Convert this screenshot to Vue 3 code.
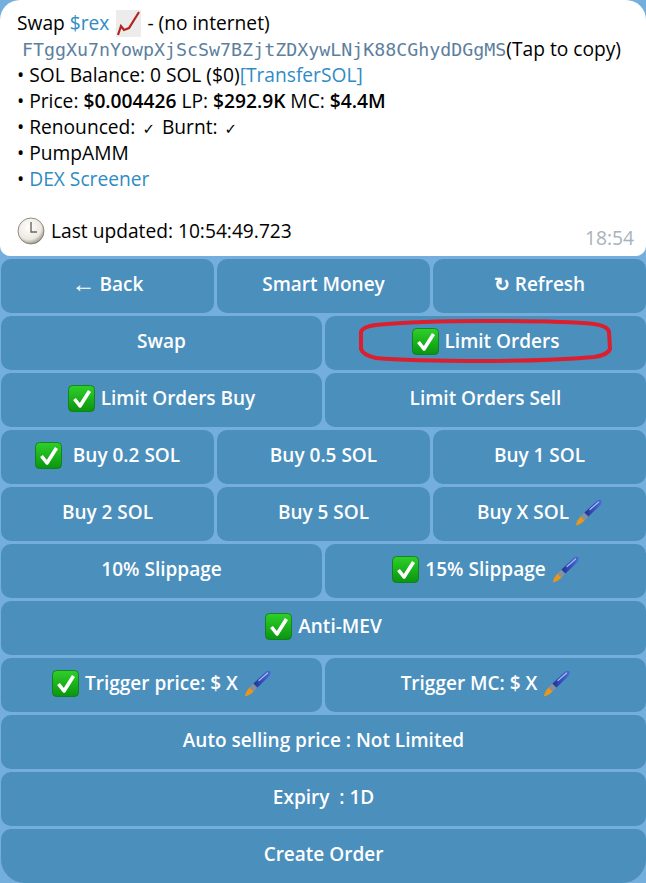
<script setup>
const filas = [
  [{ flecha: '←', texto: 'Back' }, { texto: 'Smart Money' }, { texto: '↻ Refresh' }],
  [{ texto: 'Swap' }, { texto: 'Limit Orders', check: true, marcado: true }],
  [{ texto: 'Limit Orders Buy', check: true }, { texto: 'Limit Orders Sell' }],
  [{ texto: ' Buy 0.2 SOL', check: true }, { texto: 'Buy 0.5 SOL' }, { texto: 'Buy 1 SOL' }],
  [{ texto: 'Buy 2 SOL' }, { texto: 'Buy 5 SOL' }, { texto: 'Buy X SOL', pincel: true }],
  [{ texto: '10% Slippage' }, { texto: '15% Slippage', check: true, pincel: true }],
  [{ texto: 'Anti-MEV', check: true }],
  [{ texto: 'Trigger price: $ X', check: true, pincel: true }, { texto: 'Trigger MC: $ X', pincel: true }],
  [{ texto: 'Auto selling price : Not Limited' }],
  [{ texto: 'Expiry  : 1D' }],
  [{ texto: 'Create Order' }],
]
</script>

<template>
  <div class="pagina">
    <svg width="0" height="0" class="defs">
      <defs>
        <linearGradient id="verde" x1="0" y1="0" x2="0" y2="1">
          <stop offset="0" stop-color="#2fd02a" />
          <stop offset="1" stop-color="#0a950f" />
        </linearGradient>
        <linearGradient id="azul" x1="0" y1="1" x2="1" y2="1">
          <stop offset="0" stop-color="#1f2f96" />
          <stop offset="1" stop-color="#4a6fd8" />
        </linearGradient>
        <radialGradient id="esfera" cx="0.42" cy="0.35" r="0.72">
          <stop offset="0" stop-color="#ffffff" />
          <stop offset="0.66" stop-color="#ece8e0" />
          <stop offset="1" stop-color="#7f7a72" />
        </radialGradient>
        <symbol id="check" viewBox="0 0 27 27">
          <rect x="0.5" y="0.5" width="26" height="26" rx="4" fill="url(#verde)" stroke="#0b7a12" stroke-width="0.8" />
          <path d="M6.5 14 L12 21 L21.5 6" fill="none" stroke="#fff" stroke-width="3.6" stroke-linejoin="round" />
        </symbol>
        <symbol id="pincel" viewBox="0 0 27 27">
          <path d="M9.5 13.5 L22 1.8 Q25 0 26.4 1.2 Q27.6 3 25.5 6 L13.5 17.5 Z" fill="url(#azul)" />
          <path d="M15 10.5 L23.5 3" fill="none" stroke="#a9bdf2" stroke-width="1.2" stroke-linecap="round" />
          <path d="M5.5 17.5 L9 14 L13 18 L9.5 21.5 Z" fill="#8b8f96" />
          <path d="M0.8 26.5 Q2 21 5.5 17.5 L9.5 21.5 Q6 25.5 0.8 26.5 Z" fill="#e8961c" />
        </symbol>
      </defs>
    </svg>

    <section class="burbuja">
      <p class="linea">Swap <a class="enlace">$rex</a>
        <svg class="grafico" width="25" height="27" viewBox="0 0 25 27">
          <rect x="0" y="0" width="25" height="27" fill="#ececec" />
          <path d="M2 25 L5 16 L8 20 L13 18 L23 2" fill="none" stroke="#b3231f" stroke-width="2.2" />
        </svg>
        - (no internet)</p>
      <p class="linea"><code class="direccion">FTggXu7nYowpXjScSw7BZjtZDXywLNjK88CGhydDGgMS</code>(Tap to copy)</p>
      <p class="linea">• SOL Balance: 0 SOL ($0)<a class="enlace">[TransferSOL]</a></p>
      <p class="linea">• Price: <b>$0.004426</b> LP: <b>$292.9K</b> MC: <b>$4.4M</b></p>
      <p class="linea">• Renounced: <span class="visto">✓</span> Burnt: <span class="visto">✓</span></p>
      <p class="linea">• PumpAMM</p>
      <p class="linea">• <a class="enlace">DEX Screener</a></p>
      <p class="linea">&nbsp;</p>
      <p class="linea actualizado">
        <svg class="reloj" width="28" height="28" viewBox="0 0 28 28">
          <circle cx="14" cy="14" r="13" fill="url(#esfera)" stroke="#77736c" stroke-width="0.8" />
          <path d="M14 5 V15 H20" fill="none" stroke="#6a665f" stroke-width="1.4" />
        </svg>
        Last updated: 10:54:49.723
      </p>
      <span class="hora">18:54</span>
    </section>

    <div class="teclado">
      <div v-for="(fila, i) in filas" :key="i" class="fila">
        <button v-for="boton in fila" :key="boton.texto" class="boton">
          <svg v-if="boton.check" class="icono" width="27" height="27"><use href="#check" /></svg>
          <span v-if="boton.flecha" class="flecha">{{ boton.flecha }}</span>
          <span class="etiqueta">{{ boton.texto }}</span>
          <svg v-if="boton.pincel" class="icono" width="27" height="27"><use href="#pincel" /></svg>
          <svg v-if="boton.marcado" class="marca" width="254" height="44" viewBox="0 0 254 44">
            <path d="M3 13 Q4 8 18 6 Q60 2 126 2 Q205 2 236 5 Q250 7 251 13 L252 30 Q250 36 236 38 Q190 42 126 42 Q50 42 18 39 Q5 36 3 30 Z" fill="none" stroke="#dc1f2e" stroke-width="4" />
          </svg>
        </button>
      </div>
    </div>
  </div>
</template>

<style scoped>
.pagina {
  width: 646px;
  height: 883px;
  overflow: hidden;
  background: #73aedd;
  font-family: "Open Sans", "Liberation Sans", "Noto Sans", sans-serif;
}

.defs {
  position: absolute;
}

.burbuja {
  position: relative;
  height: 256px;
  box-sizing: border-box;
  padding: 10px 10px 0 17px;
  background: #fff;
  border-radius: 20px 20px 10px 10px;
  color: #000;
  font-size: 19.2px;
  line-height: 26px;
}

.linea {
  margin: 0;
  height: 26px;
  white-space: nowrap;
}

.linea b {
  font-weight: 600;
}

.enlace {
  color: #2f8cc4;
}

.grafico {
  vertical-align: -7px;
  margin: 0 1px 0 7px;
}

.direccion {
  margin-left: 5px;
  font-family: "DejaVu Sans Mono", monospace;
  font-size: 18.3px;
  color: #5d7f9e;
}

.visto {
  font-family: "DejaVu Sans", sans-serif;
  font-size: 15px;
  margin: 0 2px;
}

.actualizado {
  display: flex;
  align-items: center;
  gap: 6px;
}

.hora {
  position: absolute;
  right: 12px;
  bottom: 6px;
  font-size: 19.2px;
  line-height: 24px;
  color: #a7b1ba;
}

.teclado {
  display: flex;
  flex-direction: column;
  gap: 3px;
  padding: 3px 0 0 1px;
}

.fila {
  display: flex;
  gap: 3px;
  height: 54px;
}

.boton {
  position: relative;
  flex: 1 1 0;
  min-width: 0;
  display: flex;
  align-items: center;
  justify-content: center;
  gap: 6px;
  padding: 0 0 4px;
  border: 0;
  border-radius: 10px;
  background: #4b8fbd;
  color: #fff;
  font-family: inherit;
  font-size: 19px;
  font-weight: 600;
}

.fila:last-child .boton {
  border-radius: 10px 10px 24px 24px;
}

.etiqueta {
  white-space: pre;
}

.flecha {
  margin: -3px -2px 0 0;
  font-size: 24px;
  font-weight: 400;
  line-height: 1;
}

.icono {
  flex: none;
}

.marca {
  position: absolute;
  left: 33px;
  top: 3px;
}
</style>
